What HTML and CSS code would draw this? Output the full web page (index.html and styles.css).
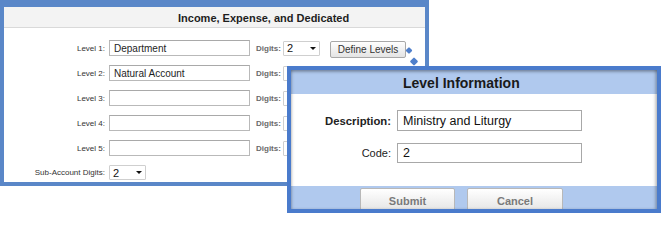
FILE: index.html
```html
<!DOCTYPE html>
<html lang="en">
<head>
<meta charset="utf-8">
<title>Level Information</title>
<link rel="stylesheet" href="styles.css">
</head>
<body>
<div class="stage">
  <div class="panel">
    <div class="panel-head"><span class="panel-title">Income, Expense, and Dedicated</span></div>
    <div class="panel-body">
      <div class="row">
        <label class="lbl">Level 1:</label>
        <input class="fld" type="text" value="Department" readonly>
        <span class="dig">Digits:</span>
        <div class="sel"><span>2</span><i class="caret"></i></div>
        <button class="btn-define" type="button">Define Levels</button>
      </div>
      <div class="row">
        <label class="lbl">Level 2:</label>
        <input class="fld" type="text" value="Natural Account" readonly>
        <span class="dig">Digits:</span>
        <div class="sel"><span>2</span><i class="caret"></i></div>
      </div>
      <div class="row">
        <label class="lbl">Level 3:</label>
        <input class="fld" type="text" value="" readonly>
        <span class="dig">Digits:</span>
        <div class="sel"><span></span><i class="caret"></i></div>
      </div>
      <div class="row">
        <label class="lbl">Level 4:</label>
        <input class="fld" type="text" value="" readonly>
        <span class="dig">Digits:</span>
        <div class="sel"><span></span><i class="caret"></i></div>
      </div>
      <div class="row">
        <label class="lbl">Level 5:</label>
        <input class="fld" type="text" value="" readonly>
        <span class="dig">Digits:</span>
        <div class="sel"><span></span><i class="caret"></i></div>
      </div>
      <div class="row row-sub">
        <label class="lbl">Sub-Account Digits:</label>
        <div class="sel sel-sub"><span>2</span><i class="caret"></i></div>
      </div>
    </div>
  </div>

  <svg class="connector" width="16" height="22" viewBox="0 0 16 22">
    <rect x="3.5" y="3" width="5" height="5" rx="1" transform="rotate(45 6 5.5)" fill="#4f7fcb"/>
    <rect x="8" y="13.5" width="6" height="6" rx="1" transform="rotate(45 11 16.5)" fill="#4f7fcb"/>
  </svg>

  <div class="dialog">
    <div class="dlg-head"><span class="dlg-title">Level Information</span></div>
    <div class="dlg-body">
      <div class="dlg-row">
        <label class="dlg-lbl dlg-lbl-strong">Description:</label>
        <input class="dlg-fld" type="text" value="Ministry and Liturgy" readonly>
      </div>
      <div class="dlg-row">
        <label class="dlg-lbl">Code:</label>
        <input class="dlg-fld dlg-fld-code" type="text" value="2" readonly>
      </div>
    </div>
    <div class="dlg-foot">
      <button class="dlg-btn dlg-btn-submit" type="button">Submit</button>
      <button class="dlg-btn dlg-btn-cancel" type="button">Cancel</button>
    </div>
  </div>
</div>
</body>
</html>
```
FILE: styles.css
```css
html, body {
  margin: 0;
  padding: 0;
  background: #ffffff;
}
body {
  font-family: "Liberation Sans", Arial, sans-serif;
  color: #222;
}
.stage {
  position: relative;
  width: 661px;
  height: 213px;
  overflow: hidden;
}

/* ---------- left panel ---------- */
.panel {
  box-sizing: border-box;
  width: 429px;
  height: 186px;
  border: 4px solid #5a87c8;
  border-top-width: 7px;
  background: #fff;
}
.panel-head {
  box-sizing: border-box;
  height: 21px;
  background: #f3f3f3;
  border-bottom: 1px solid #d9d9d9;
  padding-left: 174px;
  line-height: 20px;
}
.panel-title {
  font-size: 11px;
  font-weight: bold;
  color: #1e1e1e;
}
.panel-body {
  padding-top: 12px;
}
.row {
  display: flex;
  align-items: center;
  height: 16px;
  margin-bottom: 9px;
}
.lbl {
  width: 101px;
  margin-right: 4px;
  text-align: right;
  font-size: 8px;
  color: #333;
  white-space: nowrap;
}
.fld {
  box-sizing: border-box;
  width: 141px;
  height: 16px;
  margin: 0;
  border: 1px solid #b9b9b9;
  border-top-color: #a9a9a9;
  padding: 0 4px;
  font-family: "Liberation Sans", Arial, sans-serif;
  font-size: 10px;
  color: #1e1e1e;
  background: #fff;
  outline: none;
}
.dig {
  width: 24px;
  margin-left: 6px;
  margin-right: 3px;
  font-size: 8px;
  font-weight: bold;
  color: #6a6a6a;
  white-space: nowrap;
}
.sel {
  box-sizing: border-box;
  display: flex;
  align-items: center;
  width: 37px;
  height: 15px;
  border: 1px solid #cfcfcf;
  border-radius: 1px;
  padding-left: 3px;
  background: #fff;
  font-size: 11px;
  color: #111;
}
.caret {
  margin-left: auto;
  margin-right: 3px;
  width: 0;
  height: 0;
  border-left: 3px solid transparent;
  border-right: 3px solid transparent;
  border-top: 3px solid #111;
}
.btn-define {
  box-sizing: border-box;
  width: 76px;
  height: 17px;
  margin: 2px 0 0 10px;
  padding: 0;
  border: 1px solid #a8a8a8;
  border-radius: 2px;
  background: linear-gradient(#fefefe, #e4e4e4);
  font-family: "Liberation Sans", Arial, sans-serif;
  font-size: 10px;
  color: #333;
}
.row-sub {
  height: 15px;
}

/* ---------- connector ---------- */
.connector {
  position: absolute;
  left: 403px;
  top: 45px;
}

/* ---------- dialog ---------- */
.dialog {
  position: absolute;
  left: 287px;
  top: 66px;
  box-sizing: border-box;
  width: 374px;
  height: 147px;
  border: 4px solid #4a7bcc;
  background: #fff;
  overflow: hidden;
  display: flex;
  flex-direction: column;
}
.dialog::after {
  content: "";
  position: absolute;
  inset: 0;
  pointer-events: none;
  box-shadow: inset 0 3px 3px -1px rgba(0, 0, 0, 0.28),
              inset 2px 0 3px -1px rgba(0, 0, 0, 0.22),
              inset -3px 0 3px -1px rgba(0, 0, 0, 0.22);
}
.dlg-head {
  height: 24px;
  flex: none;
  background: #b0c9ee;
  padding-left: 112px;
  line-height: 25px;
}
.dlg-title {
  font-size: 14px;
  font-weight: bold;
  color: #1a1a1a;
}
.dlg-body {
  box-sizing: border-box;
  height: 92px;
  flex: none;
  padding-top: 16px;
  background: #fff;
}
.dlg-row {
  display: flex;
  align-items: center;
  height: 21px;
  margin-bottom: 11px;
}
.dlg-lbl {
  width: 100px;
  margin-right: 6px;
  text-align: right;
  font-size: 11px;
  color: #222;
}
.dlg-lbl-strong {
  font-weight: bold;
  font-size: 11.3px;
}
.dlg-fld {
  box-sizing: border-box;
  width: 185px;
  height: 21px;
  margin: 0;
  border: 1px solid #a8a8a8;
  padding: 0 5px;
  font-family: "Liberation Sans", Arial, sans-serif;
  font-size: 12.5px;
  color: #111;
  background: #fff;
  outline: none;
}
.dlg-fld-code {
  height: 20px;
}
.dlg-foot {
  flex: 1;
  display: flex;
  align-items: flex-start;
  gap: 12px;
  padding: 2px 0 0 69px;
  background: #b0c9ee;
}
.dlg-btn {
  box-sizing: border-box;
  height: 26px;
  flex: none;
  margin: 0;
  padding: 0;
  border: 1px solid #b8b8b8;
  border-radius: 2px;
  background: linear-gradient(#ffffff, #e2e2e2);
  font-family: "Liberation Sans", Arial, sans-serif;
  font-size: 11px;
  font-weight: bold;
  color: #7a7a7a;
}
.dlg-btn-submit {
  width: 95px;
}
.dlg-btn-cancel {
  width: 96px;
}
```
